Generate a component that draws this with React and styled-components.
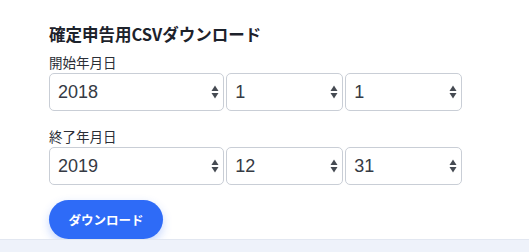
import React from "react";
import styled, { createGlobalStyle } from "styled-components";

const Global = createGlobalStyle`
  html, body { margin: 0; padding: 0; background: #fff; }
  body { font-family: "Noto Sans CJK JP", "Noto Sans", sans-serif; }
`;

const Page = styled.div`
  width: 529px;
  height: 252px;
  display: flex;
  flex-direction: column;
  overflow: hidden;
`;

const Content = styled.div`
  flex: 1;
  padding: 24px 0 0 49px;
  width: 413px;
`;

const Title = styled.h2`
  margin: 0 0 9px;
  font-size: 16.5px;
  line-height: 20px;
  font-weight: 700;
  color: #1d222b;
`;

const Label = styled.div`
  font-size: 13.5px;
  line-height: 19px;
  color: #2a2e36;
  margin-bottom: 1px;
`;

const Row = styled.div`
  display: flex;
  gap: 2px;
  margin-bottom: ${(p) => p.$mb || 16}px;
`;

const Field = styled.div`
  position: relative;
  flex: ${(p) => p.$grow};
  min-width: 0;
`;

const Select = styled.select`
  appearance: none;
  -webkit-appearance: none;
  width: 100%;
  height: 38px;
  box-sizing: border-box;
  border: 1px solid #c9ced6;
  border-radius: 5px;
  background: #fff;
  padding: 0 24px 0 8px;
  font-family: "Liberation Sans", "Noto Sans", sans-serif;
  font-size: 18px;
  color: #353a44;
  outline: none;
`;

const Arrow = styled.svg`
  position: absolute;
  right: 5px;
  top: 50%;
  transform: translateY(-50%);
  pointer-events: none;
`;

const Button = styled.button`
  width: 114px;
  height: 39px;
  border: none;
  border-radius: 20px;
  background: #2e6bf7;
  color: #fff;
  font-family: "Noto Sans CJK JP", sans-serif;
  font-size: 12.5px;
  font-weight: 700;
  box-shadow: 0 4px 10px rgba(46, 107, 247, 0.28);
  cursor: pointer;
`;

const Footer = styled.div`
  height: 12px;
  background: #eef2fa;
  border-top: 1px solid #e2e7f1;
`;

const years = Array.from({ length: 10 }, (_, i) => 2015 + i);
const months = Array.from({ length: 12 }, (_, i) => i + 1);
const days = Array.from({ length: 31 }, (_, i) => i + 1);

function Updown() {
  return (
    <Arrow width="8" height="14" viewBox="0 0 8 14">
      <path d="M4 0.5 L7.5 6 L0.5 6 Z" fill="#454a52" />
      <path d="M0.5 8 L7.5 8 L4 13.5 Z" fill="#454a52" />
    </Arrow>
  );
}

function DateRow({ y, m, d, mb }) {
  return (
    <Row $mb={mb}>
      <Field $grow={3}>
        <Select defaultValue={y}>
          {years.map((v) => (
            <option key={v} value={v}>{v}</option>
          ))}
        </Select>
        <Updown />
      </Field>
      <Field $grow={2}>
        <Select defaultValue={m}>
          {months.map((v) => (
            <option key={v} value={v}>{v}</option>
          ))}
        </Select>
        <Updown />
      </Field>
      <Field $grow={2}>
        <Select defaultValue={d}>
          {days.map((v) => (
            <option key={v} value={v}>{v}</option>
          ))}
        </Select>
        <Updown />
      </Field>
    </Row>
  );
}

export default function App() {
  return (
    <Page>
      <Global />
      <Content>
        <Title>確定申告用CSVダウンロード</Title>
        <Label>開始年月日</Label>
        <DateRow y={2018} m={1} d={1} mb={16} />
        <Label>終了年月日</Label>
        <DateRow y={2019} m={12} d={31} mb={15} />
        <Button>ダウンロード</Button>
      </Content>
      <Footer />
    </Page>
  );
}
